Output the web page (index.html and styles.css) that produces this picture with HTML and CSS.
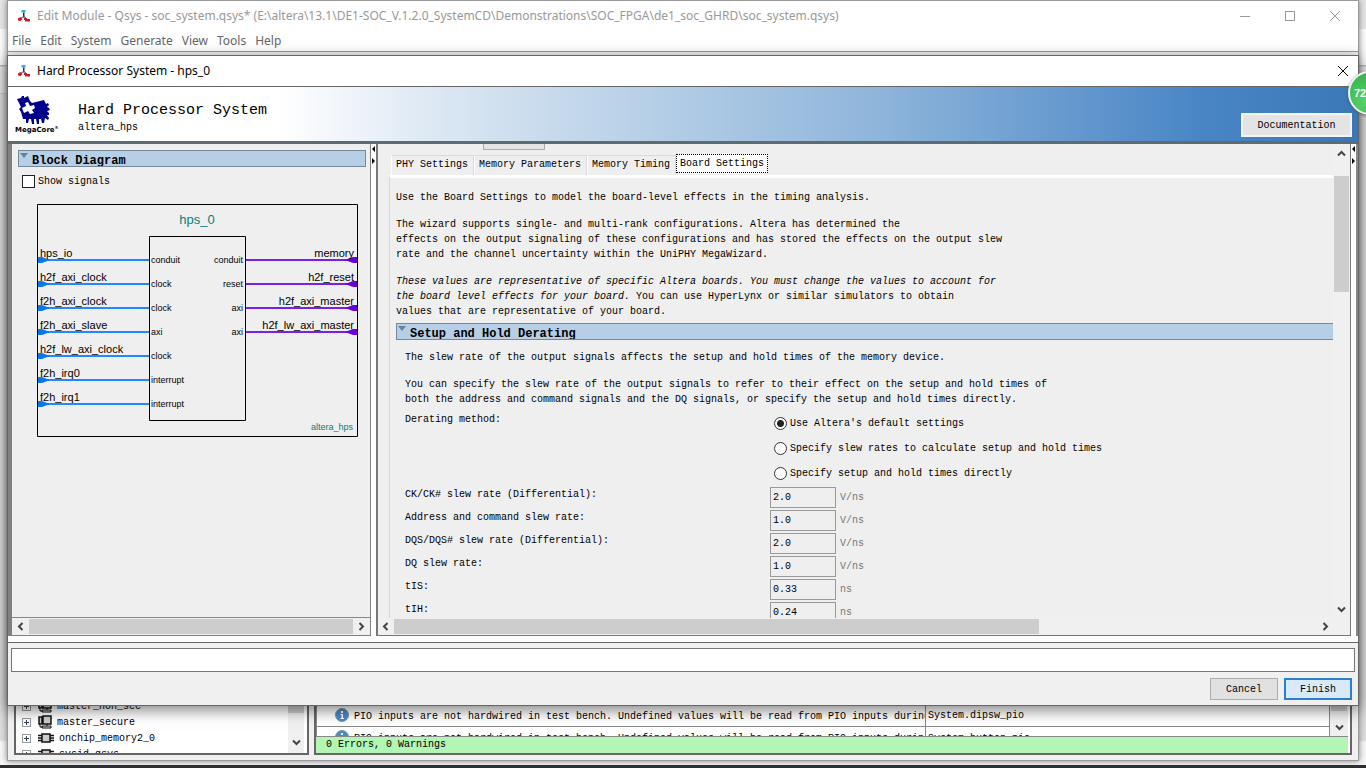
FILE: index.html
```html
<!DOCTYPE html>
<html lang="en">
<head>
<meta charset="utf-8">
<title>Hard Processor System - hps_0</title>
<link rel="stylesheet" href="styles.css">
</head>
<body>
<svg class="defs" width="0" height="0" aria-hidden="true">
  <symbol id="qsys" viewBox="0 0 12 12">
    <path d="M3.500 0h4v2.500h-4z" fill="#38a8e8"/>
    <path d="M5 2.500h1.500v5H5z" fill="#235"/>
    <path d="M5.500 6.500 2 9M6 6.500 9 9" stroke="#455" fill="none"/>
    <path d="M0 8.500 2.500 7 4.500 9 2.500 11 0 10.500zM6 8h2v1h4v2.500H7V10H6z" fill="#d8141c"/>
  </symbol>
  <symbol id="info" viewBox="0 0 14 14">
    <circle cx="7" cy="7" r="6.500" fill="#4a8ac6" stroke="#7b95ad"/>
    <path d="M6 3h2v2H6zM5.500 6H8v4h1v1H5.500v-1h1V7h-1z" fill="#fff"/>
  </symbol>
  <symbol id="host" viewBox="0 0 16 14">
    <path d="M2 2h3v7H2zM6 1h8v8H6z" fill="#ccc" stroke="#111" stroke-width="1.500"/>
    <path d="M3 9v3h3M5 11h9v2H5zM10 9v2" fill="#ddd" stroke="#111"/>
  </symbol>
  <symbol id="chip" viewBox="0 0 16 14">
    <path d="M0 4.500h16M0 7h16M0 9.500h16" stroke="#111" stroke-width="1.500"/>
    <path d="M4 3h8v8H4z" fill="#ccc" stroke="#111" stroke-width="1.500"/>
  </symbol>
</svg>

<div class="desktop">
  <section class="window main-window">
    <header class="titlebar inactive">
      <svg class="app-icon"><use href="#qsys"/></svg>
      <span class="title">Edit Module - Qsys - soc_system.qsys* (E:\altera\13.1\DE1-SOC_V.1.2.0_SystemCD\Demonstrations\SOC_FPGA\de1_soc_GHRD\soc_system.qsys)</span>
      <div class="window-buttons">
        <button aria-label="Minimize"><svg viewBox="0 0 12 12"><path d="M1 6.500h10"/></svg></button>
        <button aria-label="Maximize"><svg viewBox="0 0 12 12"><path d="M1.500 1.500h9v9h-9z"/></svg></button>
        <button aria-label="Close window"><svg viewBox="0 0 12 12"><path d="m1 1 10 10M11 1 1 11"/></svg></button>
      </div>
    </header>
    <nav class="menu">
      <button>File</button><button>Edit</button><button>System</button><button>Generate</button><button>View</button><button>Tools</button><button>Help</button>
    </nav>
    <div class="workspace">
      <div class="library">
        <ul class="tree">
          <li><i class="expander"></i><svg><use href="#host"/></svg>master_non_sec</li>
          <li><i class="expander"></i><svg><use href="#host"/></svg>master_secure</li>
          <li><i class="expander"></i><svg><use href="#chip"/></svg>onchip_memory2_0</li>
          <li><i class="expander"></i><svg><use href="#chip"/></svg>sysid_qsys</li>
        </ul>
        <div class="back-scroll"><i class="thumb"></i><svg class="arrow" viewBox="0 0 9 6"><path d="m1 1 3.500 3.500L8 1"/></svg></div>
      </div>
      <div class="messages">
        <div class="message-list">
          <div class="message-clip">
            <table>
              <tr><td><svg><use href="#info"/></svg>PIO inputs are not hardwired in test bench. Undefined values will be read from PIO inputs during</td><td>System.dipsw_pio</td></tr>
              <tr><td><svg><use href="#info"/></svg>PIO inputs are not hardwired in test bench. Undefined values will be read from PIO inputs during</td><td>System.button_pio</td></tr>
            </table>
          </div>
          <div class="back-scroll"><i class="thumb"></i><svg class="arrow" viewBox="0 0 9 6"><path d="m1 1 3.500 3.500L8 1"/></svg></div>
        </div>
        <div class="status">0 Errors, 0 Warnings</div>
      </div>
    </div>
  </section>

  <section class="window dialog">
    <header class="titlebar">
      <svg class="app-icon"><use href="#qsys"/></svg>
      <span class="title">Hard Processor System - hps_0</span>
      <div class="window-buttons">
        <button aria-label="Close"><svg viewBox="0 0 12 12"><path d="m1 1 10 10M11 1 1 11"/></svg></button>
      </div>
    </header>
    <div class="banner">
      <div class="logo">
        <svg viewBox="0 0 36 30">
          <path d="M2 4 6 3 7 1 9 1 9 3 13 1 15 6 17 8 29 5 31 9 33 8 34 10 32 12 34 13 35 15 32 16 34 18 34 20 32 20 34 23 33 25 30 23 29 28 27 28 26 24 24 24 24 29 22 29 21 24 19 24 19 29 17 29 16 24 14 24 13 28 11 28 11 24 8 24 6 17 4 14 6 12z" fill="#00008c"/>
          <path d="m7 13 4-2-1-3 3-1 2 4 4-1 1 3-3 2 2 3-4 1-2-3-4 2z" fill="#fff"/>
        </svg>
        <b>MegaCore<sup>®</sup></b>
      </div>
      <div class="names"><h1>Hard Processor System</h1><p>altera_hps</p></div>
      <button class="doc">Documentation</button>
    </div>
    <div class="panes">
      <div class="pane left-pane">
        <div class="diagram-area">
          <h2 class="section"><i></i>Block Diagram</h2>
          <label class="check"><input type="checkbox">Show signals</label>
          <svg class="diagram" viewBox="0 0 321 233" role="img" aria-label="Block diagram of hps_0">
            <g fill="none" stroke="#000"><path d="M.5.5h320v232H.5zM112.500 32.500h96v184h-96z"/></g>
            <g stroke="#2288ff" stroke-width="2"><path d="M2 56h110M2 80h110M2 104h110M2 128h110M2 152h110M2 176h110M2 200h110"/></g>
            <g stroke="#7a1fe8" stroke-width="2"><path d="M209 56h110M209 80h110M209 104h110M209 128h110"/></g>
            <path fill="#0878f0" d="M1 53h4l8 3-8 3H1zm0 24h4l8 3-8 3H1zm0 24h4l8 3-8 3H1zm0 24h4l8 3-8 3H1zm0 24h4l8 3-8 3H1zm0 24h4l8 3-8 3H1zm0 24h4l8 3-8 3H1z"/>
            <path fill="#6a00d8" d="M320 53h-4l-8 3 8 3h4zm0 24h-4l-8 3 8 3h4zm0 24h-4l-8 3 8 3h4zm0 24h-4l-8 3 8 3h4z"/>
            <g class="teal"><text class="name" x="160" y="20" text-anchor="middle">hps_0</text><text class="small" x="316" y="226" text-anchor="end">altera_hps</text></g>
            <g class="port">
              <text x="3" y="53">hps_io</text><text x="3" y="77">h2f_axi_clock</text><text x="3" y="101">f2h_axi_clock</text><text x="3" y="125">f2h_axi_slave</text><text x="3" y="149">h2f_lw_axi_clock</text><text x="3" y="173">f2h_irq0</text><text x="3" y="197">f2h_irq1</text>
            </g>
            <g class="port" text-anchor="end">
              <text x="317" y="53">memory</text><text x="317" y="77">h2f_reset</text><text x="317" y="101">h2f_axi_master</text><text x="317" y="125">h2f_lw_axi_master</text>
            </g>
            <g class="small">
              <text x="114" y="59">conduit</text><text x="114" y="83">clock</text><text x="114" y="107">clock</text><text x="114" y="131">axi</text><text x="114" y="155">clock</text><text x="114" y="179">interrupt</text><text x="114" y="203">interrupt</text>
            </g>
            <g class="small" text-anchor="end">
              <text x="206" y="59">conduit</text><text x="206" y="83">reset</text><text x="206" y="107">axi</text><text x="206" y="131">axi</text>
            </g>
          </svg>
        </div>
        <div class="hscroll"><svg class="arrow" viewBox="0 0 6 9"><path d="M5 1 1.500 4.500 5 8"/></svg><i class="thumb"></i><svg class="arrow" viewBox="0 0 6 9"><path d="m1 1 3.500 3.500L1 8"/></svg></div>
      </div>
      <div class="splitter"><svg viewBox="0 0 5 20"><path d="M4 2v6L1 5zM1 14v6l3-3z"/></svg></div>
      <div class="pane right-pane">
        <div class="scroll-row">
          <div class="viewport">
            <div class="cut-button"></div>
            <div class="tabs" role="tablist">
              <button role="tab">PHY Settings</button><button role="tab">Memory Parameters</button><button role="tab">Memory Timing</button><button role="tab" class="active" aria-selected="true">Board Settings</button>
            </div>
            <div class="tab-body">
              <p>Use the Board Settings to model the board-level effects in the timing analysis.</p>
              <p>The wizard supports single- and multi-rank configurations. Altera has determined the<br>effects on the output signaling of these configurations and has stored the effects on the output slew<br>rate and the channel uncertainty within the UniPHY MegaWizard.</p>
              <p><em>These values are representative of specific Altera boards. You must change the values to account for<br>the board level effects for your board.</em> You can use HyperLynx or similar simulators to obtain<br>values that are representative of your board.</p>
              <h2 class="section"><i></i>Setup and Hold Derating</h2>
              <div class="group">
                <p>The slew rate of the output signals affects the setup and hold times of the memory device.</p>
                <p>You can specify the slew rate of the output signals to refer to their effect on the setup and hold times of<br>both the address and command signals and the DQ signals, or specify the setup and hold times directly.</p>
                <div class="form">
                  <span id="method">Derating method:</span>
                  <div class="radios" role="radiogroup" aria-labelledby="method">
                    <label><input type="radio" name="derating" checked>Use Altera's default settings</label>
                    <label><input type="radio" name="derating">Specify slew rates to calculate setup and hold times</label>
                    <label><input type="radio" name="derating">Specify setup and hold times directly</label>
                  </div>
                  <label for="ck">CK/CK# slew rate (Differential):</label><div class="field"><input id="ck" value="2.0" readonly><span>V/ns</span></div>
                  <label for="addr">Address and command slew rate:</label><div class="field"><input id="addr" value="1.0" readonly><span>V/ns</span></div>
                  <label for="dqs">DQS/DQS# slew rate (Differential):</label><div class="field"><input id="dqs" value="2.0" readonly><span>V/ns</span></div>
                  <label for="dq">DQ slew rate:</label><div class="field"><input id="dq" value="1.0" readonly><span>V/ns</span></div>
                  <label for="tis">tIS:</label><div class="field"><input id="tis" value="0.33" readonly><span>ns</span></div>
                  <label for="tih">tIH:</label><div class="field"><input id="tih" value="0.24" readonly><span>ns</span></div>
                </div>
              </div>
            </div>
          </div>
          <div class="vscroll"><svg class="arrow" viewBox="0 0 9 6"><path d="M1 5 4.500 1.500 8 5"/></svg><i class="thumb"></i><svg class="arrow" viewBox="0 0 9 6"><path d="m1 1 3.500 3.500L8 1"/></svg></div>
        </div>
        <div class="hscroll wide"><svg class="arrow" viewBox="0 0 6 9"><path d="M5 1 1.500 4.500 5 8"/></svg><i class="thumb"></i><svg class="arrow" viewBox="0 0 6 9"><path d="m1 1 3.500 3.500L1 8"/></svg></div>
      </div>
      <div class="splitter edge"><svg viewBox="0 0 5 20"><path d="M4 2v6L1 5zM1 14v6l3-3z"/></svg></div>
    </div>
    <footer class="footer">
      <input type="text" class="output" aria-label="Messages" readonly>
      <div class="actions"><button>Cancel</button><button class="primary">Finish</button></div>
    </footer>
  </section>
  <div class="badge">72</div>
</div>
</body>
</html>
```

FILE: styles.css
```css
* { box-sizing: border-box; }
body, h1, h2, p, ul { margin: 0; padding: 0; }
body {
  font: 10px/15px "Liberation Mono", monospace;
  color: #000;
  overflow: hidden;
}
button, input { font: inherit; color: inherit; margin: 0; }
button { padding: 0; }
.defs { position: absolute; }
.arrow { width: 9px; height: 9px; flex: none; fill: none; stroke: #444; stroke-width: 2; }

.desktop {
  position: relative;
  height: 100vh;
  overflow: hidden;
  background: linear-gradient(#e4e4e4 29px, #fafafa 29px, #fafafa 65px, #bbb 65px, #bbb 66px, #e8e8e8 67px, #e8e8e8 93px, #bbb 93px, #dcdcdc 94px, #dcdcdc 740px, #f6f6f6 742px);
  border-bottom: 3px solid #2e2f34;
}
.window { position: absolute; left: 7px; right: 7px; display: flex; flex-direction: column; }
.main-window {
  top: 0;
  bottom: 4px;
  background: #f0f0f0;
  border: 1px solid #999;
  box-shadow: 0 0 6px #777;
}
.dialog {
  top: 55px;
  bottom: 59px;
  background: #f0f0f0;
  border: 1px solid #666;
  box-shadow: 0 4px 14px rgba(0, 0, 0, .5);
}

.titlebar {
  display: flex;
  align-items: center;
  height: 30px;
  flex: none;
  padding: 0 9px 0 10px;
  gap: 7px;
  background: #fff;
  font: 12px/16px "Noto Sans", sans-serif;
}
.titlebar .title { flex: 1; white-space: nowrap; overflow: hidden; }
.inactive { color: #999; padding-right: 17px; }
.app-icon { width: 12px; height: 12px; flex: none; }
.window-buttons { display: flex; gap: 33px; }
.window-buttons button { width: 12px; height: 12px; border: 0; background: none; }
.window-buttons svg { display: block; width: 12px; height: 12px; fill: none; stroke: #000; }
.inactive .window-buttons svg { stroke: #999; }
.menu {
  display: flex;
  gap: 9px;
  height: 21px;
  flex: none;
  padding-left: 4px;
  background: #fff;
  border-bottom: 1px solid #999;
}
.menu button { border: 0; background: none; color: #666; font: 12px/18px "Noto Sans", sans-serif; }

.workspace { flex: 1; min-height: 0; display: flex; gap: 5px; padding: 4px 6px 5px; }
.library, .messages { border: 2px solid #666; border-top: 0; background: #fff; }
.library { width: 295px; display: flex; align-items: flex-end; }
.tree { flex: 1; height: 55px; padding-left: 6px; overflow: hidden; list-style: none; }
.tree li { display: flex; align-items: center; gap: 4px; height: 16px; }
.tree li:nth-child(n+3) { gap: 5px; }
.tree svg { width: 16px; height: 14px; margin-left: 2px; }
.expander {
  width: 9px;
  height: 9px;
  border: 1px solid #999;
  background: linear-gradient(#345, #345) center/5px 1px no-repeat, linear-gradient(#345, #345) center/1px 5px no-repeat;
}
.back-scroll {
  width: 16px;
  height: 60px;
  flex: none;
  display: flex;
  flex-direction: column;
  align-items: center;
  justify-content: space-between;
  padding-bottom: 6px;
  background: #f0f0f0;
}
.library .back-scroll { margin-right: 3px; }
.back-scroll .thumb { width: 16px; height: 20px; background: #cdcdcd; }
.messages { flex: 1; min-width: 0; display: flex; flex-direction: column; justify-content: flex-end; padding-right: 2px; }
.message-list { display: flex; align-items: flex-end; border-bottom: 1px solid #888; }
.message-clip { flex: 1; min-width: 0; height: 30px; overflow: hidden; }
.messages .back-scroll { width: 18px; height: 30px; padding-bottom: 4px; }
.messages .back-scroll .thumb { height: 5px; }
.messages table { width: 100%; table-layout: fixed; border-collapse: collapse; }
.messages td { height: 20px; padding: 0; white-space: nowrap; overflow: hidden; border: 1px solid #888; border-top: 0; }
.messages tr:last-child td { height: 24px; }
.messages td:first-child { width: 609px; padding-left: 18px; }
.messages td:last-child { padding-left: 2px; }
.messages td svg { width: 14px; height: 14px; margin-right: 5px; vertical-align: -3px; }
.status { height: 16px; padding-left: 10px; background: #b3f5b3; }

.banner {
  display: flex;
  height: 58px;
  flex: none;
  padding: 8px 6px 0 7px;
  border-top: 1px solid #666;
  border-bottom: 3px solid #5d6b73;
  background: linear-gradient(90deg, #fff 20%, #dbe7f3 32%, #8db4da 65%, #4a86c6 88%, #3a78b8);
}
.logo { width: 44px; }
.logo svg { display: block; width: 36px; height: 30px; }
.logo b { display: block; font: bold 7px/11px "DejaVu Sans", sans-serif; white-space: nowrap; }
.logo sup { font-size: 4px; vertical-align: 3px; line-height: 1px; }
.names { flex: 1; padding: 6px 0 0 19px; }
.names h1 { font-size: 15px; line-height: 20px; font-weight: normal; }
.names p { line-height: 14px; }
.doc { align-self: flex-start; width: 111px; height: 24px; margin-top: 18px; border: 2px solid #f4f4f4; background: #e4e4e4; }

.panes { flex: 1; min-height: 0; display: flex; padding-bottom: 6px; background: #fcfcfc; }
.pane { display: flex; flex-direction: column; background: #efefef; }
.left-pane { width: 363px; border: 1px solid #808080; border-width: 0 1px 1px 4px; }
.diagram-area { flex: 1; min-height: 0; padding: 6px 4px 0 6px; border-bottom: 1px solid #888; overflow: hidden; }
.section {
  display: flex;
  gap: 4px;
  height: 17px;
  padding: 2px 0 0 1px;
  overflow: hidden;
  border: 1px solid #76899b;
  background: #b6cee6;
  font-size: 12px;
  line-height: 17px;
}
.section i { border: 4px solid transparent; border-top: 5px solid #66849c; height: 5px; }
.check { display: flex; align-items: center; gap: 3px; padding: 7px 0 0 4px; }
.check input { appearance: none; width: 13px; height: 13px; border: 1px solid #222; background: #fff; }
.diagram { display: block; width: 321px; height: 233px; margin: 15px 0 0 19px; font-family: "Liberation Sans", sans-serif; }
.teal { fill: #008080; }
.name { font-size: 13px; }
.port { font-size: 11px; }
.small { font-size: 9px; }

.hscroll { display: flex; align-items: center; height: 17px; flex: none; padding: 0 4px; gap: 4px; background: #f0f0f0; }
.hscroll .thumb { flex: 1; height: 15px; background: #cdcdcd; }
.hscroll.wide { padding: 0 20px 0 3px; }
.wide .thumb { flex: none; width: 68%; }
.wide .arrow:last-child { margin-left: auto; }
.splitter { width: 5px; flex: none; background: #fff; }
.splitter svg { display: block; width: 5px; height: 20px; }
.splitter.edge { width: 7px; border-right: 2px solid #888; }

.right-pane { flex: 1; min-width: 0; border: 1px solid #777; border-width: 0 1px 1px 2px; }
.scroll-row { flex: 1; min-height: 0; display: flex; }
.viewport { flex: 1; min-width: 0; overflow: hidden; padding-left: 11px; }
.cut-button { width: 62px; height: 6px; margin-left: 94px; border: 1px solid #aaa; border-top: 0; background: #e4e4e4; }
.tabs { display: flex; align-items: flex-end; height: 25px; padding-left: 2px; }
.tabs button { height: 20px; padding: 0 5px 2px 4px; border: 1px solid #dadada; border-left-color: #fff; border-bottom: 0; background: #efefef; }
.tabs .active { height: 19px; margin-bottom: 2px; padding: 0 3px; border: 1px dotted #000; background: #fff; }
.tab-body { border: 1px solid #d6d6d6; border-top: 3px solid #fff; border-right: 0; padding: 12px 0 0 6px; }
.tab-body p { margin-bottom: 12px; white-space: nowrap; }
.tab-body .section { margin-top: -8px; border-right: 0; }
.group { padding: 10px 0 0 9px; }
.group p:nth-child(2) { margin-bottom: 5px; }
.form { display: grid; grid-template-columns: 365px 1fr; row-gap: 2px; }
.radios { display: grid; gap: 10px; padding: 4px 0 4px 4px; }
.radios label { display: flex; align-items: center; gap: 3px; height: 15px; }
.radios input {
  appearance: none;
  width: 13px;
  height: 13px;
  border: 1px solid #333;
  border-radius: 50%;
  background: #fff;
}
.radios input:checked { background: radial-gradient(circle, #222 3px, #fff 4px); }
.field { display: flex; align-items: center; gap: 4px; color: #777; }
.field input { width: 66px; height: 21px; padding: 0 2px; border: 1px solid #999; background: #efefef; color: #000; border-radius: 0; }
.vscroll { width: 17px; flex: none; display: flex; flex-direction: column; align-items: center; gap: 18px; padding: 5px 0 4px; background: #f0f0f0; }
.vscroll .thumb { width: 15px; height: 25%; background: #cdcdcd; }
.vscroll .arrow:last-child { margin-top: auto; }

.footer { flex: none; border-top: 1px solid #666; padding: 5px 3px 5px; }
.output { display: block; width: 100%; height: 24px; border: 1px solid #777; background: #fff; }
.actions { display: flex; justify-content: flex-end; gap: 6px; padding: 6px 3px 0; }
.actions button { width: 68px; height: 22px; border: 1px solid #adadad; background: #e1e1e1; }
.actions .primary { border: 2px solid #2a7fd0; background: #d8eafa; }

.badge {
  position: absolute;
  top: 71px;
  right: -26px;
  width: 44px;
  height: 44px;
  padding-left: 4px;
  border: 2px solid #eee;
  border-radius: 50%;
  background: radial-gradient(circle at 40% 70%, #56d468, #2ea848);
  box-shadow: 0 1px 3px #555;
  color: #fff;
  font: bold 11px/40px "Liberation Sans", sans-serif;
}
```
